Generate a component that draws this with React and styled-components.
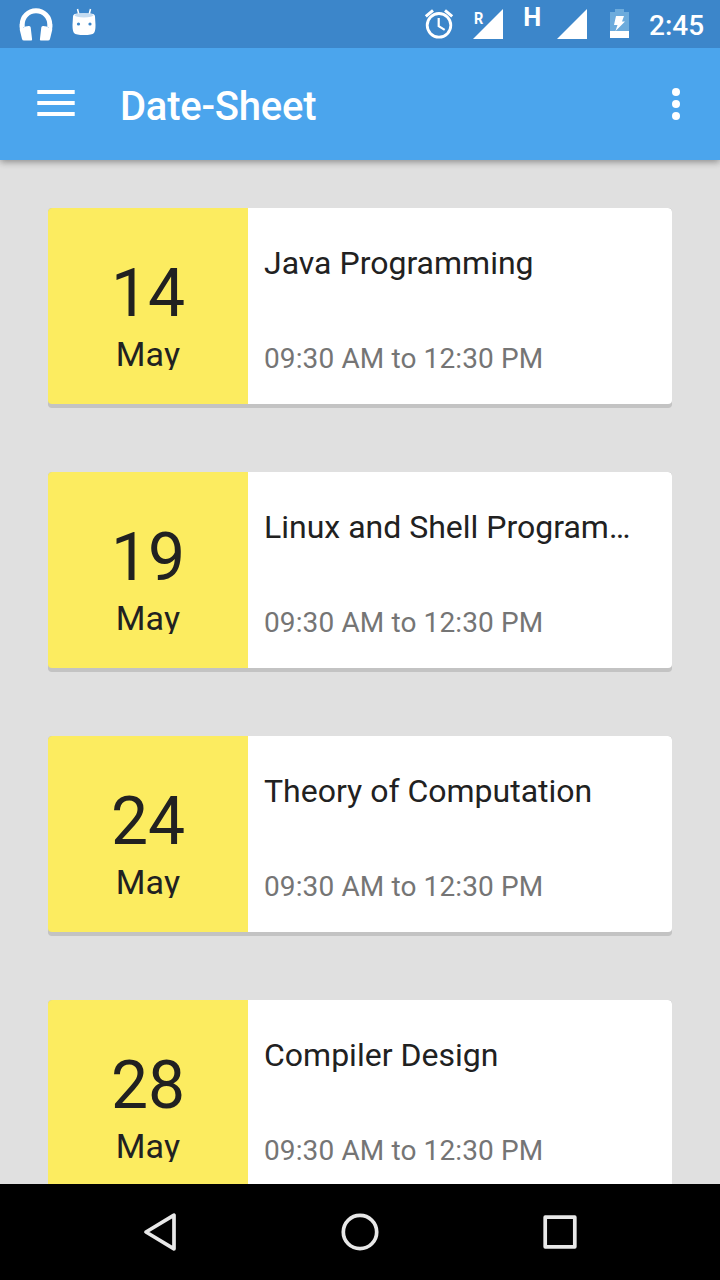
import React from "react";
import styled, { createGlobalStyle } from "styled-components";

const GlobalStyle = createGlobalStyle`
  * { box-sizing: border-box; }
  body { margin: 0; font-family: Roboto, sans-serif; }
`;

const Screen = styled.div`
  display: flex;
  flex-direction: column;
  width: 720px;
  height: 1280px;
  overflow: hidden;
  background: #e0e0e0;
`;

const StatusBar = styled.header`
  flex: none;
  z-index: 2;
  display: flex;
  justify-content: space-between;
  height: 48px;
  background: #3c86ca;
  color: #fff;
`;

const StatusGroup = styled.div`
  display: flex;
  height: 48px;
  svg { display: block; flex: none; }
`;

const Clock = styled.span`
  width: 71px;
  font-size: 28px;
  font-weight: 500;
  line-height: 52px;
  white-space: nowrap;
`;

const AppBar = styled.div`
  flex: none;
  z-index: 1;
  display: flex;
  align-items: center;
  height: 112px;
  padding: 0 28px 0 32px;
  background: #4ba5ed;
  box-shadow: 0 2px 7px rgba(0, 0, 0, 0.38);
`;

const IconButton = styled.button`
  display: flex;
  padding: 0;
  border: 0;
  background: none;
  color: #fff;
`;

const PageTitle = styled.h1`
  flex: 1;
  margin: 0 0 0 40px;
  padding-top: 6px;
  color: #fff;
  font-size: 40px;
  font-weight: 500;
  letter-spacing: -0.24px;
  line-height: 48px;
`;

const ExamList = styled.main`
  flex: 1;
  min-height: 0;
  overflow: hidden;
  display: flex;
  flex-direction: column;
  gap: 64px;
  padding: 48px 48px 0;
`;

const Card = styled.article`
  flex: none;
  display: flex;
  height: 200px;
  border-radius: 4px;
  border-bottom: 4px solid #c3c3c3;
  overflow: hidden;
  background: #c3c3c3;
`;

const DatePanel = styled.div`
  width: 200px;
  height: 196px;
  padding-top: 47px;
  border-radius: 4px 0 0 4px;
  background: #fcec60;
  color: #212121;
  text-align: center;
`;

const Day = styled.div`
  font-size: 66px;
  line-height: 78px;
`;

const Month = styled.div`
  height: 36px;
  margin-top: 1px;
  overflow: hidden;
  font-size: 34px;
  letter-spacing: 0.2px;
  line-height: 40px;
`;

const Details = styled.div`
  flex: 1;
  min-width: 0;
  height: 196px;
  padding: 36px 32px 0 16px;
  border-radius: 0 4px 4px 0;
  background: #fff;
`;

const Subject = styled.h2`
  margin: 0;
  overflow: hidden;
  text-overflow: ellipsis;
  white-space: nowrap;
  color: #212121;
  font-size: 32px;
  font-weight: 400;
  line-height: 38px;
`;

const Time = styled.p`
  margin: 60px 0 0;
  color: #757575;
  font-size: 28px;
  letter-spacing: 0.12px;
  line-height: 34px;
`;

const NavBar = styled.nav`
  flex: none;
  display: flex;
  justify-content: center;
  align-items: center;
  gap: 136px;
  height: 96px;
  background: #000;
  color: #e8e8e8;
`;

const exams = [
  { day: 14, month: "May", subject: "Java Programming" },
  { day: 19, month: "May", subject: "Linux and Shell Programming" },
  { day: 24, month: "May", subject: "Theory of Computation" },
  { day: 28, month: "May", subject: "Compiler Design" },
];

const NotificationIcons = () => (
  <svg width="110" height="48" fill="#fff">
    <path d="M22.200 27.500v-3a13.800 13.800 0 0 1 27.600 0v3" fill="none" stroke="#fff" strokeWidth="5" />
    <path d="M19.800 24v6l2.200 9q.4 1.500 2 1.500h7.200q1 0 .9-1l-1.400-12q-.2-1.800-2-1.500l-3.200.5q-1.700.3-1.600 1.500z M52.200 24v6l-2.200 9q-.4 1.500-2 1.500h-7.200q-1 0-.9-1l1.400-12q.2-1.800 2-1.500l3.200.5q1.700.3 1.600 1.500z" />
    <path d="M77.500 9l1.500 6M90.500 9l-1.500 6" stroke="#fff" strokeWidth="1.500" fill="none" />
    <path d="M73 16.500Q73 13.500 78 13.500H90Q95 13.500 95 16.500L95.500 25Q95.500 31 94 33Q92 35 84 35T74 33Q72.500 31 72.500 25z" />
    <ellipse cx="84" cy="15.300" rx="9.500" ry="2.200" fill="#c5dcf1" />
    <circle cx="78.500" cy="24" r="1.600" fill="#3c86ca" />
    <circle cx="90" cy="24" r="1.600" fill="#3c86ca" />
  </svg>
);

const AlarmIcon = () => (
  <svg width="40" height="48" fill="none" stroke="#fff">
    <circle cx="19" cy="25.300" r="11.800" strokeWidth="2.800" />
    <path d="M5.800 16.300l7.200-6M32.200 16.300l-7.200-6" strokeWidth="3" />
    <path d="M18.700 18v8.200l6 3.700" strokeWidth="2.200" />
  </svg>
);

const SignalIcon = ({ label, size, width, left, x, y, labelWidth }) => (
  <svg width={width} height="48" fill="#fff">
    <path d={`M${left} 39h30V9z`} />
    <text x={x} y={y} fontSize={size} fontWeight="700" textLength={labelWidth} lengthAdjust="spacingAndGlyphs">
      {label}
    </text>
  </svg>
);

const BatteryIcon = () => (
  <svg width="49" height="48">
    <path d="M10 12h5V9h9v3h5v26H10z" fill="#6cabdc" />
    <path d="M10 31h19v7H10z" fill="#fff" />
    <path d="M16 16h8l-2 5.500h3L15.500 31l2-6H14z" fill="#fff" />
  </svg>
);

const MenuIcon = () => (
  <svg width="48" height="48" fill="#fff">
    <path d="M5.300 10h37.400v4H5.300zM5.300 21h37.400v4H5.300zM5.300 32h37.400v4H5.300z" />
  </svg>
);

const MoreIcon = () => (
  <svg width="32" height="48" fill="#fff">
    <circle cx="16" cy="12" r="4" />
    <circle cx="16" cy="24" r="4" />
    <circle cx="16" cy="36" r="4" />
  </svg>
);

const NavIcon = ({ children }) => (
  <svg width="64" height="64" fill="none" stroke="currentColor" strokeWidth="3.700" strokeLinejoin="round">
    {children}
  </svg>
);

export default function App() {
  return (
    <Screen>
      <GlobalStyle />
      <StatusBar>
        <StatusGroup>
          <NotificationIcons />
        </StatusGroup>
        <StatusGroup>
          <AlarmIcon />
          <SignalIcon label="R" size="17" width={60} left={13} x={14} y={24} labelWidth={9.3} />
          <SignalIcon label="H" size="25.300" width={80} left={37} x={3.2} y={26} labelWidth={18} />
          <BatteryIcon />
          <Clock>2:45</Clock>
        </StatusGroup>
      </StatusBar>
      <AppBar>
        <IconButton aria-label="Menu"><MenuIcon /></IconButton>
        <PageTitle>Date-Sheet</PageTitle>
        <IconButton aria-label="More options"><MoreIcon /></IconButton>
      </AppBar>
      <ExamList>
        {exams.map((exam) => (
          <Card key={exam.day}>
            <DatePanel>
              <Day>{exam.day}</Day>
              <Month>{exam.month}</Month>
            </DatePanel>
            <Details>
              <Subject>{exam.subject}</Subject>
              <Time>09:30 AM to 12:30 PM</Time>
            </Details>
          </Card>
        ))}
      </ExamList>
      <NavBar>
        <NavIcon><path d="M18 32L46 15.200V48.800z" /></NavIcon>
        <NavIcon><circle cx="32" cy="32" r="16.700" /></NavIcon>
        <NavIcon><rect x="17.200" y="17.200" width="29.600" height="29.600" /></NavIcon>
      </NavBar>
    </Screen>
  );
}
